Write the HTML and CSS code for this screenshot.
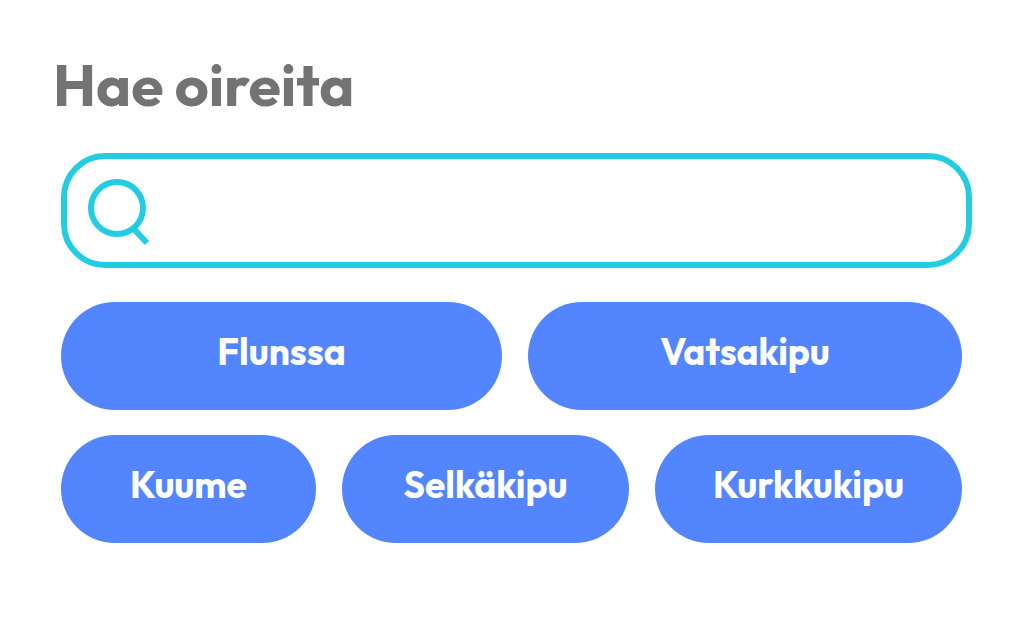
FILE: index.html
```html
<!DOCTYPE html>
<html lang="fi">
<head>
<meta charset="utf-8">
<meta name="viewport" content="width=device-width, initial-scale=1">
<title>Hae oireita</title>
<link rel="stylesheet" href="styles.css">
</head>
<body>
<main class="page">
  <h1 class="title" id="search-title">Hae oireita</h1>
  <form class="search" role="search">
    <svg class="search-icon" viewBox="0 0 62 66" aria-hidden="true">
      <circle cx="30" cy="30" r="26"/>
      <path d="M46 50 60 65"/>
    </svg>
    <input class="search-input" type="search" aria-labelledby="search-title">
  </form>
  <div class="symptoms">
    <div class="row row-two">
      <button class="chip" type="button">Flunssa</button>
      <button class="chip" type="button">Vatsakipu</button>
    </div>
    <div class="row row-three">
      <button class="chip" type="button">Kuume</button>
      <button class="chip" type="button">Selkäkipu</button>
      <button class="chip" type="button">Kurkkukipu</button>
    </div>
  </div>
</main>
</body>
</html>
```
FILE: styles.css
```css
* {
  box-sizing: border-box;
}

body {
  margin: 0;
  background: #fff;
  font-family: Outfit, Lato, "Open Sans", sans-serif;
}

.page {
  padding: 48px 62px 74px 61px;
}

.title {
  margin: 0 0 33px -8px;
  color: #737373;
  font-size: 59px;
  line-height: 72px;
  font-weight: 700;
}

.search {
  display: flex;
  align-items: center;
  gap: 16px;
  height: 115px;
  padding: 0 20px;
  border: 6px solid #22cce2;
  border-radius: 44px;
}

.search-icon {
  flex: none;
  width: 62px;
  height: 66px;
  overflow: visible;
  fill: none;
  stroke: #22cce2;
  stroke-width: 6;
}

.search-input {
  flex: 1;
  min-width: 0;
  height: 80px;
  border: 0;
  outline: 0;
  background: transparent;
  color: #737373;
  font: inherit;
  font-size: 37px;
}

.symptoms {
  display: grid;
  gap: 25px;
  padding: 34px 10px 0 0;
}

.row {
  display: grid;
  gap: 26px;
}

.row-two {
  grid-template-columns: 441fr 434fr;
}

.row-three {
  grid-template-columns: 255fr 287fr 307fr;
}

.chip {
  min-width: 0;
  height: 108px;
  padding: 0 0 8px;
  border: 0;
  border-radius: 54px;
  background: #5285ff;
  color: #fff;
  font-family: inherit;
  font-size: 37px;
  line-height: 48px;
  font-weight: 700;
}
```
